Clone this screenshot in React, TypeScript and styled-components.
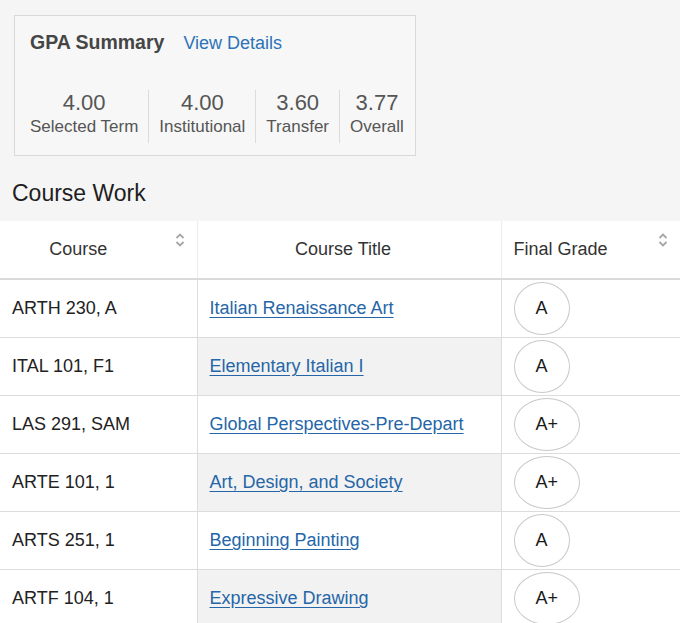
import React from 'react';
import styled, { createGlobalStyle } from 'styled-components';

const GlobalStyle = createGlobalStyle`
  html, body {
    margin: 0;
    padding: 0;
    background: #f5f5f5;
    font-family: "Liberation Sans", Arial, sans-serif;
  }
`

const Page = styled.div`
  width: 680px;
  padding-top: 15px;
`

const SummaryCard = styled.section`
  box-sizing: border-box;
  width: 402px;
  height: 141px;
  margin-left: 14px;
  padding: 15px 0 0 15px;
  background: #f7f7f7;
  border: 1px solid #d9d9d9;
`

const CardHeader = styled.div`
  display: flex;
  align-items: baseline;
  gap: 19px;
  height: 26px;
`

const CardTitle = styled.h2`
  margin: 0;
  font-size: 19.5px;
  font-weight: bold;
  color: #454545;
`

const DetailsLink = styled.a`
  font-size: 18px;
  color: #2d73b8;
  text-decoration: none;
  cursor: pointer;
`

const Stats = styled.div`
  display: flex;
  margin: 33px 0 0 -10px;
`

const Stat = styled.div<{ $divider?: boolean }>`
  display: flex;
  flex-direction: column;
  align-items: center;
  flex-shrink: 0;
  white-space: nowrap;
  padding: 0 10px 5px;
  border-left: ${(props) => (props.$divider ? '1px solid #dcdcdc' : 'none')};
`

const StatValue = styled.span`
  font-size: 22px;
  line-height: 26px;
  color: #555;
`

const StatLabel = styled.span`
  font-size: 17px;
  line-height: 22px;
  color: #555;
`

const SectionTitle = styled.h3`
  margin: 24px 0 15px 12px;
  font-size: 23px;
  line-height: 26px;
  font-weight: normal;
  color: #1e1e1e;
`

const Table = styled.table`
  width: 680px;
  border-collapse: collapse;
  background: #fff;
  table-layout: fixed;
`

const HeadCell = styled.th<{ $align: 'center' | 'left'; $padRight: number }>`
  position: relative;
  height: 57px;
  padding: 0 ${(props) => props.$padRight}px 0 ${(props) => (props.$align === 'left' ? 12 : 0)}px;
  text-align: ${(props) => props.$align};
  font-size: 18px;
  font-weight: normal;
  color: #333;
  border-bottom: 2px solid #dadada;
  & + & {
    border-left: 1px solid #ececec;
  }
`

const SortIcon = styled.svg`
  position: absolute;
  top: 12px;
  right: 12px;
  width: 10px;
  height: 14px;
  fill: none;
  stroke: #a6a6a6;
  stroke-width: 1.8px;
`

const Row = styled.tr`
  border-bottom: 1px solid #dcdcdc;
`

const Cell = styled.td<{ $shaded?: boolean }>`
  height: 57px;
  padding: 0 12px;
  font-size: 18px;
  color: #222;
  background: ${(props) => (props.$shaded ? '#f2f2f2' : 'transparent')};
  & + & {
    border-left: 1px solid #dcdcdc;
  }
`

const CourseLink = styled.a`
  color: #2566a8;
  text-decoration: underline;
  text-underline-offset: 3px;
  cursor: pointer;
`

const GradeBadge = styled.span`
  display: inline-block;
  padding: 15px 21px;
  line-height: 21px;
  border: 1px solid #c9c9c9;
  border-radius: 50%;
  background: #fff;
  color: #1a1a1a;
`

const stats = [
  { value: '4.00', label: 'Selected Term' },
  { value: '4.00', label: 'Institutional' },
  { value: '3.60', label: 'Transfer' },
  { value: '3.77', label: 'Overall' },
]

const courses = [
  { code: 'ARTH 230, A', title: 'Italian Renaissance Art', grade: 'A' },
  { code: 'ITAL 101, F1', title: 'Elementary Italian I', grade: 'A' },
  { code: 'LAS 291, SAM', title: 'Global Perspectives-Pre-Depart', grade: 'A+' },
  { code: 'ARTE 101, 1', title: 'Art, Design, and Society', grade: 'A+' },
  { code: 'ARTS 251, 1', title: 'Beginning Painting', grade: 'A' },
  { code: 'ARTF 104, 1', title: 'Expressive Drawing', grade: 'A+' },
]

const Sort = () => (
  <SortIcon viewBox="0 0 10 14">
    <polyline points="1.5 5 5 1.5 8.5 5" />
    <polyline points="1.5 9 5 12.5 8.5 9" />
  </SortIcon>
)

const App = () => (
  <Page>
    <GlobalStyle />
    <SummaryCard>
      <CardHeader>
        <CardTitle>GPA Summary</CardTitle>
        <DetailsLink>View Details</DetailsLink>
      </CardHeader>
      <Stats>
        {stats.map((s, i) => (
          <Stat key={s.label} $divider={i > 0}>
            <StatValue>{s.value}</StatValue>
            <StatLabel>{s.label}</StatLabel>
          </Stat>
        ))}
      </Stats>
    </SummaryCard>

    <SectionTitle>Course Work</SectionTitle>

    <Table>
      <colgroup>
        <col style={{ width: 197 }} />
        <col style={{ width: 304 }} />
        <col style={{ width: 179 }} />
      </colgroup>
      <thead>
        <tr>
          <HeadCell $align="center" $padRight={40}>
            Course
            <Sort />
          </HeadCell>
          <HeadCell $align="center" $padRight={12}>Course Title</HeadCell>
          <HeadCell $align="left" $padRight={30}>
            Final Grade
            <Sort />
          </HeadCell>
        </tr>
      </thead>
      <tbody>
        {courses.map((c, i) => (
          <Row key={c.code}>
            <Cell>{c.code}</Cell>
            <Cell $shaded={i % 2 === 1}>
              <CourseLink>{c.title}</CourseLink>
            </Cell>
            <Cell>
              <GradeBadge>{c.grade}</GradeBadge>
            </Cell>
          </Row>
        ))}
      </tbody>
    </Table>
  </Page>
)

export default App;
